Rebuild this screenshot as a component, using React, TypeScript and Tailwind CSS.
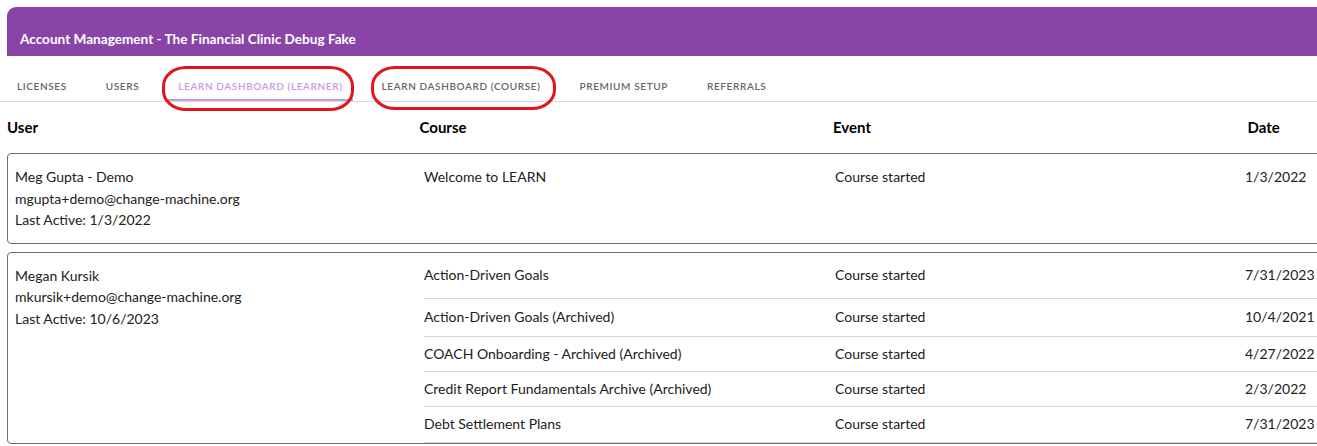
const tabs = [
  { label: 'Licenses' },
  { label: 'Users' },
  { label: 'Learn Dashboard (Learner)', active: true },
  { label: 'Learn Dashboard (Course)' },
  { label: 'Premium Setup' },
  { label: 'Referrals' },
]

const learners = [
  {
    name: 'Meg Gupta - Demo',
    email: 'mgupta+demo@change-machine.org',
    lastActive: '1/3/2022',
    rows: [{ course: 'Welcome to LEARN', event: 'Course started', date: '1/3/2022', h: 'h-[46px]' }],
    single: true,
  },
  {
    name: 'Megan Kursik',
    email: 'mkursik+demo@change-machine.org',
    lastActive: '10/6/2023',
    rows: [
      { course: 'Action-Driven Goals', event: 'Course started', date: '7/31/2023', h: 'h-[46px]' },
      { course: 'Action-Driven Goals (Archived)', event: 'Course started', date: '10/4/2021', h: 'h-[38px]' },
      { course: 'COACH Onboarding - Archived (Archived)', event: 'Course started', date: '4/27/2022', h: 'h-[35px]' },
      { course: 'Credit Report Fundamentals Archive (Archived)', event: 'Course started', date: '2/3/2022', h: 'h-[35px]' },
      { course: 'Debt Settlement Plans', event: 'Course started', date: '7/31/2023', h: 'h-[36px]' },
    ],
  },
]

export default function App() {
  return (
    <div
      className="relative h-[446px] w-[1317px] overflow-hidden bg-white text-[#212121]"
      style={{ fontFamily: 'Lato, "Noto Sans", sans-serif' }}
    >
      <div className="w-[1660px] pl-[7px] pt-[7px]">
        {/* page header */}
        <div className="h-[49px] rounded-tl-[9px] bg-[#8a44a8] pl-[13px] pt-[22px]">
          <h1 className="text-[13.6px] font-bold leading-[20px] text-white">
            Account Management - The Financial Clinic Debug Fake
          </h1>
        </div>

        {/* tabs */}
        <div className="-ml-[7px] flex h-[46px] gap-[19px] border-b border-[#d9d9d9] pl-[7px]">
          {tabs.map((t) => (
            <div
              key={t.label}
              className={
                'flex items-center px-[10px] pt-[18px] text-[10px] font-semibold uppercase tracking-[0.62px] ' +
                (t.active
                  ? 'border-b-2 border-[#c79be3] text-[#c79be3]'
                  : 'border-b-2 border-transparent text-[#666]')
              }
            >
              {t.label}
            </div>
          ))}
        </div>

        {/* table header */}
        <div className="flex h-[51px] items-center text-[15px] font-bold text-black">
          <div className="w-[414px]">User</div>
          <div className="w-[415px]">Course</div>
          <div className="w-[416px]">Event</div>
          <div className="w-[414px]">Date</div>
        </div>

        {/* learner cards */}
        <div className="flex flex-col gap-[8px]">
          {learners.map((l) => (
            <div
              key={l.email}
              className="flex rounded-l-[4px] border border-[#6b6f74] text-[14px] leading-[21.5px]"
            >
              <div className="w-[416px] pb-[12px] pl-[7px] pt-[12px]">
                <p>{l.name}</p>
                <p>{l.email}</p>
                <p>Last Active: {l.lastActive}</p>
              </div>
              <div className="flex-1">
                {l.rows.map((r) => (
                  <div
                    key={r.course}
                    className={
                      'flex items-center ' +
                      r.h +
                      (l.single ? '' : ' border-b border-[#d6d6d6]')
                    }
                  >
                    <div className="w-[411px]">{r.course}</div>
                    <div className="w-[410px]">{r.event}</div>
                    <div>{r.date}</div>
                  </div>
                ))}
              </div>
            </div>
          ))}
        </div>
      </div>

      {/* red annotation marks */}
      <div className="absolute left-[162px] top-[66px] h-[45px] w-[192px] rounded-[24px/20px] border-[3px] border-[#e5141b]" />
      <div className="absolute left-[371px] top-[66px] h-[44px] w-[185px] rounded-[24px/20px] border-[3px] border-[#e5141b]" />
    </div>
  )
}
